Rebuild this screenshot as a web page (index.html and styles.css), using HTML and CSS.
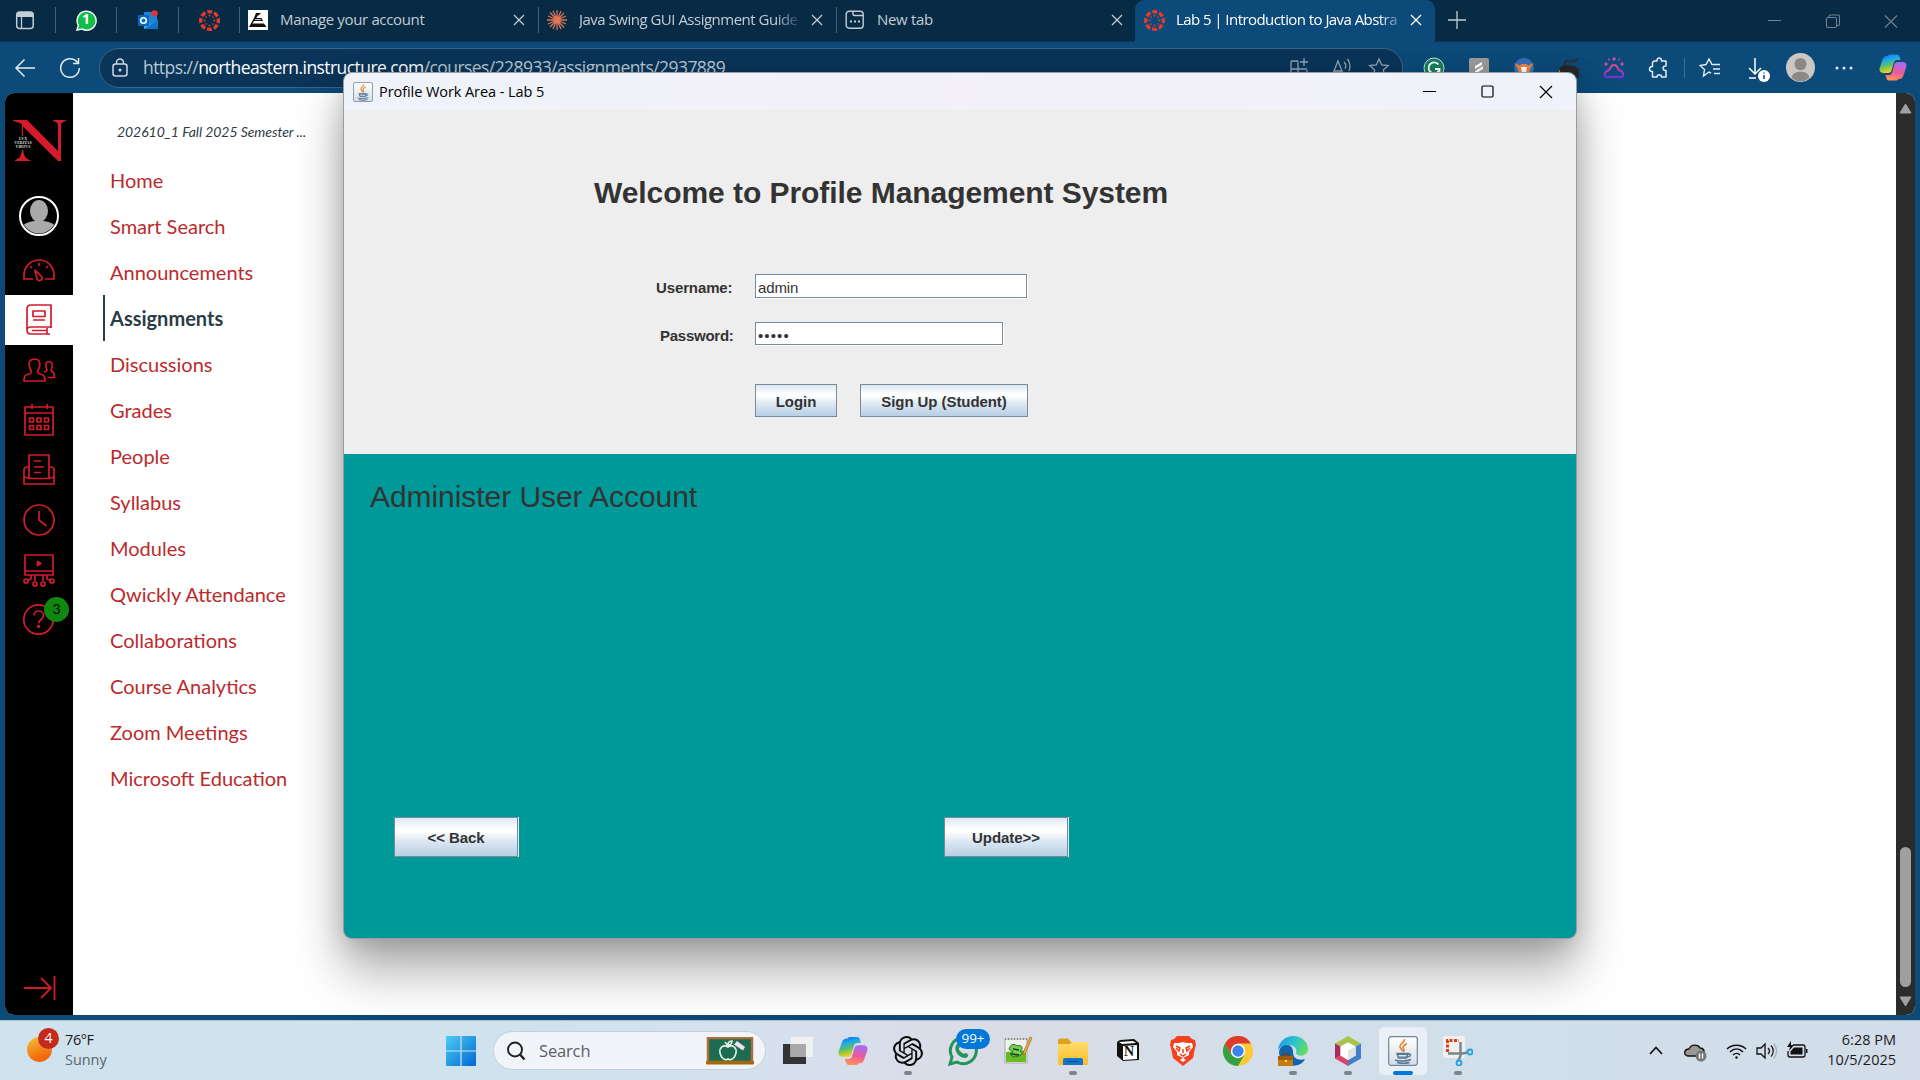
FILE: index.html
```html
<!DOCTYPE html>
<html lang="en">
<head>
<meta charset="utf-8">
<title>Lab 5 | Introduction to Java</title>
<link rel="stylesheet" href="styles.css">
</head>
<body>
<svg class="defs" aria-hidden="true">
  <defs>
    <linearGradient id="cpA" x1="0" y1="0" x2="0.3" y2="1"><stop offset="0" stop-color="#1a5fe0"/><stop offset=".35" stop-color="#18a8ee"/><stop offset=".65" stop-color="#5cc069"/><stop offset="1" stop-color="#f5d215"/></linearGradient>
    <linearGradient id="cpB" x1="0.4" y1="0" x2="0.2" y2="1"><stop offset="0" stop-color="#a56bf2"/><stop offset=".5" stop-color="#ec5a9c"/><stop offset="1" stop-color="#ff9a4a"/></linearGradient>
    <linearGradient id="win" x1="0" y1="0" x2="1" y2="1"><stop offset="0" stop-color="#4ccbf8"/><stop offset="1" stop-color="#0169cf"/></linearGradient>
    <linearGradient id="edg" x1="0" y1=".3" x2="1" y2=".6"><stop offset="0" stop-color="#1b9de2"/><stop offset=".5" stop-color="#2cc3d2"/><stop offset="1" stop-color="#67dc5c"/></linearGradient>
    <linearGradient id="fold" x1="0" y1="0" x2="0" y2="1"><stop offset="0" stop-color="#ffdc69"/><stop offset="1" stop-color="#fbbd2b"/></linearGradient>
    <linearGradient id="jv" x1="0" y1="0" x2="0" y2="1"><stop offset="0" stop-color="#fff"/><stop offset="1" stop-color="#d5dde4"/></linearGradient>
    <linearGradient id="paw" x1="0" y1="0" x2="0" y2="1"><stop offset="0" stop-color="#e0498f"/><stop offset="1" stop-color="#7430d8"/></linearGradient>
    <symbol id="canvas" viewBox="0 0 20 20"><circle cx="10" cy="10" r="8.400" fill="none" stroke="#e73a2e" stroke-width="3.200" stroke-dasharray="4.700 1.897" stroke-dashoffset="2.350"/><g fill="#e73a2e"><circle cx="10" cy="5.300" r=".9"/><circle cx="10" cy="14.700" r=".9"/><circle cx="5.300" cy="10" r=".9"/><circle cx="14.700" cy="10" r=".9"/><circle cx="6.700" cy="6.700" r=".8"/><circle cx="13.300" cy="6.700" r=".8"/><circle cx="6.700" cy="13.300" r=".8"/><circle cx="13.300" cy="13.300" r=".8"/></g></symbol>
    <symbol id="x" viewBox="0 0 12 12"><path d="M1 1l10 10M11 1L1 11" fill="none" stroke="currentColor" stroke-width="1.300"/></symbol>
    <symbol id="copilot" viewBox="0 0 30 28"><path d="M9.500 1.500C10 .5 11 0 12.200 0H19c2 0 2.700 1.200 3.100 2.700L23 6h-3.500c-2 0-3 1-3.600 3l-2.200 7.500C13 19 12 19.800 10 19.800H4.500C1.500 19.800 0 17.500.7 14.500L4 5C5 2.200 7 1.500 9.500 1.500z" fill="url(#cpA)"/><path d="M20.500 26.500c-.5 1-1.500 1.500-2.700 1.500H11c-2 0-2.700-1.200-3.100-2.700L7 22h3.500c2 0 3-1 3.600-3l2.200-7.500C17 9 18 8.200 20 8.200h5.500c3 0 4.500 2.300 3.800 5.300L26 23c-1 2.800-3 3.500-5.500 3.500z" fill="url(#cpB)"/></symbol>
    <symbol id="java" viewBox="0 0 30 30"><rect x=".7" y=".7" width="28.600" height="28.600" rx="2.500" fill="url(#jv)" stroke="#71859a" stroke-width="1.200"/><path d="M16.500 3c1 3-5.500 5-4.500 8 .5 1.500 2 2.500 2.500 4M19 7.500c-3 1.500-5 3.500-3.500 5.500 1 1.300.5 2.200-.5 3" fill="none" stroke="#e8812f" stroke-width="1.600"/><path d="M9 17.500h11l-1.500 4.500h-8zM20 18c3.500-.8 3.500 2.500-.8 3M7 24c3 1.500 12 1.500 16-.5M9 26.500c4 1 9 1 12.500 0" fill="none" stroke="#557997" stroke-width="1.500"/><path d="M9 18.500h11M10 21h9" stroke="#557997"/></symbol>
    <symbol id="person" viewBox="0 0 30 30"><circle cx="15" cy="15" r="15" fill="#cbc8c4"/><circle cx="15" cy="11.500" r="6.300" fill="#8b8886"/><path d="M6 25.500c0-8 18-8 18 0-5 5-13 5-18 0z" fill="#8b8886"/></symbol>
  </defs>
</svg>

<header class="tabs">
  <div class="pin p1"><svg width="20" height="20" viewBox="0 0 20 20"><rect x="1.700" y="2" width="16.500" height="16.500" rx="3" fill="none" stroke="#c4ccd4" stroke-width="1.500"/><path d="M1.700 7V5a3 3 0 013-3h10.500a3 3 0 013 3v2z" fill="#c4ccd4"/><path d="M6.500 7v11" stroke="#c4ccd4" stroke-width="1.300"/></svg></div>
  <div class="pin p2"><svg width="21" height="21" viewBox="0 0 21 21"><path d="M1 20l1.300-4.700A9.500 9.500 0 1 1 6 19z" fill="#12bd49" stroke="#e9f7ee" stroke-width="1.500"/></svg><b class="one">1</b></div>
  <div class="pin p3"><svg width="22" height="21" viewBox="0 0 22 21"><rect x="7" y="2" width="13" height="16" fill="#1b84d8"/><path d="M7 10l7 4 7-4v9H7z" fill="#36a8ec"/><path d="M7 19l14-9v9z" fill="#1374c6"/><rect x="1" y="5" width="11" height="11" rx="1" fill="#0b66c2"/><circle cx="6.500" cy="10.500" r="2.800" fill="none" stroke="#fff" stroke-width="1.600"/><circle cx="17.500" cy="3.500" r="3.200" fill="#d93740"/></svg></div>
  <div class="pin p4"><svg width="21" height="21"><use href="#canvas"/></svg></div>
  <div class="tab t1"><svg width="20" height="20" viewBox="0 0 20 20"><path fill="#fff" d="M0 0h20v20H0z"/><path d="M8 3h5l-5 5h5.500l1.500 3H6l-1.500 2.500H16L18.500 17H1l5-9z" fill="#111"/><path d="M9 6.200h4M7 9.600h6" stroke="#fff" stroke-width=".8"/></svg><span>Manage your account</span><svg class="cl" width="12" height="12"><use href="#x"/></svg></div>
  <div class="tab t2"><svg width="20" height="20" viewBox="0 0 20 20"><path d="M10 0v20M0 10h20M3 2.500l14 15M17 3L3 17M6 .8l8 18.400M14 1L6 19M1 6l18 8M1 14l18-8" stroke="#df7655" stroke-width="1.300" fill="none"/></svg><span class="fade">Java Swing GUI Assignment Guide</span><svg class="cl" width="12" height="12"><use href="#x"/></svg></div>
  <div class="tab t3"><svg width="20" height="20" viewBox="0 0 20 20"><rect x="1.200" y="1.200" width="17" height="17" rx="3" fill="none" stroke="#c4ccd4" stroke-width="1.400"/><path d="M8 1v3c0 1 .5 1.500 1.500 1.500H18" fill="none" stroke="#c4ccd4" stroke-width="1.400"/><path d="M5 11.500h2M9 11.500h2M13 11.500h2" stroke="#c4ccd4" stroke-width="2"/></svg><span>New tab</span><svg class="cl" width="12" height="12"><use href="#x"/></svg></div>
  <div class="tab active"><svg width="21" height="21"><use href="#canvas"/></svg><span class="fade">Lab 5 | Introduction to Java Abstra</span><svg class="cl" width="12" height="12"><use href="#x"/></svg></div>
  <svg class="plus" width="18" height="18" viewBox="0 0 18 18"><path d="M9 0v18M0 9h18" stroke="#c3ccd3" stroke-width="1.300"/></svg>
  <svg class="winctl" width="132" height="16" viewBox="0 0 132 16" fill="none" stroke="#71818f" stroke-width="1.100"><path d="M1 7.500h13M118 2.500l12 12M130 2.500l-12 12"/><rect x="59.500" y="4.500" width="10" height="10" rx="1.500"/><path d="M62 4V3.500a1.500 1.500 0 011.500-1.500H71a1.500 1.500 0 011.500 1.500V11a1.500 1.500 0 01-1.500 1.500h-1"/></svg>
</header>

<div class="bar">
  <svg width="22" height="22" viewBox="0 0 22 22" fill="none" stroke="#e3ebf1" stroke-width="1.500"><path d="M21 11H2M10.500 2.500L2 11l8.500 8.500"/></svg>
  <svg class="reload" width="22" height="22" viewBox="0 0 22 22" fill="none" stroke="#e3ebf1" stroke-width="1.500"><path d="M18.500 5.500A9.300 9.300 0 1 0 20.300 11M19.500 1v5.500H14"/></svg>
  <div class="url">
    <svg width="18" height="20" viewBox="0 0 18 20" fill="none" stroke="#cfd9e1" stroke-width="1.500"><rect x="2" y="6" width="14" height="12" rx="2.500"/><path d="M5.500 6V4.500a3.500 3.500 0 017 0V6"/><circle cx="9" cy="12" r=".8" fill="#cfd9e1"/></svg>
    <span class="addr"><i>https://</i>northeastern.instructure.com<i>/courses/228933/assignments/2937889</i></span>
    <svg class="uico" width="110" height="22" viewBox="0 0 110 22" fill="none" stroke="#8ea5b8" stroke-width="1.300"><path d="M9 4H3a1 1 0 00-1 1v14a1 1 0 001 1h14a1 1 0 001-1v-6M9 4v16M2 12h16M15 1v8M11 5h8M43 19l6-15 6 15M45.300 14h7.500M55 5c2 2 2 5 1 7M58.500 2c3 4 3 8 1.500 12"/><path d="M90 2l2.700 6 6.600.6-5 4.300 1.500 6.500-5.800-3.400-5.800 3.400 1.500-6.500-5-4.300 6.600-.6z"/></svg>
  </div>
  <div class="ext">
    <svg width="22" height="22" viewBox="0 0 22 22"><circle cx="11" cy="11" r="10" fill="#14805e" stroke="#c6e1d8"/><path d="M15.500 7.500A5.500 5.500 0 1 0 16.500 12H12M16.500 12v4" fill="none" stroke="#fff" stroke-width="1.800"/></svg>
    <svg width="22" height="22" viewBox="0 0 22 22"><rect x="1" y="1" width="20" height="20" rx="2" fill="#9c9c9c"/><path d="M7 9l7-4v3l-7 4zM7 14l8-5v3l-8 5z" fill="#fff"/></svg>
    <svg width="22" height="22" viewBox="0 0 22 22"><circle cx="11" cy="11" r="10" fill="#3a6fb4"/><path d="M1.500 6l5 2.500L9 7h4l2.500 1.500 5-2.500-3 5.500-2 5h-9l-2-5z" fill="#ee8740"/><path d="M8 10h6l-1 6H9z" fill="#fff"/></svg>
    <svg width="22" height="22" viewBox="0 0 22 22"><path d="M1 11l5-3 11 1 4 3v9H1z" fill="#272727"/><path d="M7 8V5c3-3 6 1 9-1 2-1 3 0 3-3" fill="none" stroke="#303030" stroke-width="2"/><path d="M1 12l4 9H1z" fill="#e8972b"/></svg>
    <svg width="22" height="22" viewBox="0 0 22 22"><path d="M3 20C0 17 3 14 6 13c2-1 1-5 5-5s3 4 5 5c3 1 6 4 3 7z" fill="none" stroke="url(#paw)" stroke-width="2.200" stroke-linejoin="round"/><g fill="#c34ca5"><circle cx="11" cy="2" r="1.800"/><circle cx="3" cy="7" r="1.700"/><circle cx="19" cy="7" r="1.700"/><circle cx="6" cy="2.500" r="1"/><circle cx="16" cy="2.500" r="1"/></g></svg>
    <svg width="22" height="22" viewBox="0 0 22 22"><path d="M6 4h3c-.5-4 5-4 4.500 0H18v5c-4-.5-4 5 0 4.500V20h-4.500c.3-3-4.800-3-4.500 0H4.500v-5.500C.5 15 .5 9.500 4.500 9.500V5.500z" fill="none" stroke="#e3ebf1" stroke-width="1.500" stroke-linejoin="round"/></svg>
  </div>
  <i class="sep"></i>
  <svg class="fav" width="22" height="22" viewBox="0 0 22 22" fill="none" stroke="#e3ebf1" stroke-width="1.400"><path d="M12 16l-2-1-5.500 4 1-6.500L1 8.500l6-1L10 2l3 5.500h8M14 12h7M15 16.500h6"/></svg>
  <svg class="down" width="26" height="28" viewBox="0 0 26 28" fill="none" stroke="#fff" stroke-width="1.500"><path d="M10 4v16M4 14l6 6 6-6M4 24h7"/><circle cx="19" cy="22" r="6" fill="#fff" stroke="none"/><path d="M19 21v4M19 18.500v1" stroke="#0c4a7a"/></svg>
  <svg class="me" width="29" height="29"><use href="#person"/></svg>
  <svg class="dots" width="18" height="4" viewBox="0 0 18 4" fill="#e3ebf1"><circle cx="2" cy="2" r="1.500"/><circle cx="9" cy="2" r="1.500"/><circle cx="16" cy="2" r="1.500"/></svg>
  <svg class="cop" width="28" height="27"><use href="#copilot"/></svg>
</div>

<main class="page">
  <nav class="rail">
    <svg class="logo" width="54" height="42" viewBox="0 0 54 42"><path d="M1 0h14l31 31V5c0-2-2-3.500-5-4V0h13v1c-3 .5-5 2-5 4v36h-3L11 6.500V16H9.800V4C7 2.500 4 1.500 1 1zM10 30h1.200c.5 6 3 9 6.800 10v1H3v-1c4-1 6.500-4 7-10z" fill="#d41b2c"/></svg>
    <div class="motto">LVX<br>VERITAS<br>VIRTVS</div>
    <svg class="ava" width="40" height="40" viewBox="0 0 40 40"><clipPath id="ac"><circle cx="20" cy="20" r="17.500"/></clipPath><circle cx="20" cy="20" r="19" stroke="#fff" stroke-width="2"/><g fill="#a9a9a9" clip-path="url(#ac)"><ellipse cx="20" cy="15" rx="9" ry="11"/><path d="M16 22h8v3c6 .5 14 3 14 9v6H2v-6c0-6 8-8.500 14-9z"/></g></svg>
    <div class="ri"><svg viewBox="0 0 34 34"><path d="M11 26H2v-4a15 15 0 0130 0v4h-9M17 10v3M8 13l2 2M26 13l-2 2M13 17l7 7c1 3-3 5-5 2z"/></svg></div>
    <div class="ri on"><svg viewBox="0 0 34 34"><path d="M29 25V2H9C6 2 5 3.500 5 6v21c0 3 1 4 4 4h19M5 27c0-2 1-3 4-3h20M25 25v6M10 27.500h14"/><path d="M11 8h12v5.500H11zM11 17h12"/></svg></div>
    <div class="ri"><svg viewBox="0 0 34 34"><path d="M2 28c0-5 1-6 5-7 3-.8 3-2 1.500-4.500C5 9 9 6 12.500 6S20 9 16.500 16.500C15 19 15 20.200 18 21c4 1 5 2 5 7zM22 19c4-1 3-2 2.300-4-1.500-4 0-6.500 2.700-6.500s4.200 2.500 2.700 6.500c-.8 2-1.200 3 .8 3.800 1.700.7 2 1.700 2 5.700h-7"/></svg></div>
    <div class="ri"><svg viewBox="0 0 34 34"><path d="M3 4h28v28H3zM3 10h28M10 1v5M25 1v5M7.500 15h4v4h-4zM15 15h4v4h-4zM22.500 15h4v4h-4zM7.500 22.500h4v4h-4zM15 22.500h4v4h-4zM22.500 22.500h4v4h-4z"/></svg></div>
    <div class="ri"><svg viewBox="0 0 34 34"><path d="M7 25V2h20v23M8 14H5c-2 0-3 1-3 3v14h30V17c0-2-1-3-3-3h-2M2 24c3 0 3 1.500 5 1.500h20c2 0 2-1.500 5-1.500M12 8h7M12 14h10M12 19.500h7"/></svg></div>
    <div class="ri"><svg viewBox="0 0 34 34"><circle cx="17" cy="17" r="15"/><path d="M17 8v9l7.500 6"/></svg></div>
    <div class="ri"><svg viewBox="0 0 34 34"><path d="M3 2h28v20H3zM3 18h28M13 22v6M21 22v6M9 22v4l-4 1.500M25 22v4l4 1.500"/><path d="M15.500 8.500v4l3.200-2z" fill="#d41b2c"/><circle cx="4" cy="28" r="2"/><circle cx="13" cy="31" r="2"/><circle cx="21" cy="31" r="2"/><circle cx="30" cy="28" r="2"/></svg></div>
    <div class="ri"><svg viewBox="0 0 34 34"><circle cx="16.500" cy="16.500" r="14.700"/><path d="M12 12.500c0-6 9.500-6 9.500 0 0 4-5 4-5 8"/><circle cx="16.500" cy="23.500" r=".8"/></svg><b class="n3">3</b></div>
    <svg class="exp" width="34" height="26" viewBox="0 0 34 26"><path d="M1 13h27M18 3l10 10-10 10M31.500 1v24" fill="none" stroke="#d41b2c" stroke-width="1.800"/></svg>
  </nav>
  <aside class="menu">
    <em>202610_1 Fall 2025 Semester ...</em>
    <a>Home</a><a>Smart Search</a><a>Announcements</a><a class="cur">Assignments</a><a>Discussions</a><a>Grades</a><a>People</a><a>Syllabus</a><a>Modules</a><a>Qwickly Attendance</a><a>Collaborations</a><a>Course Analytics</a><a>Zoom Meetings</a><a>Microsoft Education</a>
  </aside>
  <div class="scroll"><svg width="13" height="11" viewBox="0 0 13 11"><path d="M6.500 1L12 10H1z" fill="#a0a0a0" stroke="#a0a0a0" stroke-linejoin="round"/></svg><i></i><svg width="13" height="11" viewBox="0 0 13 11"><path d="M6.500 10L12 1H1z" fill="#a0a0a0" stroke="#a0a0a0" stroke-linejoin="round"/></svg></div>
</main>

<footer class="task">
  <div class="wx"><i class="sun"></i><b class="four">4</b><p>76°F<br><span>Sunny</span></p></div>
  <svg class="start" width="30" height="30" viewBox="0 0 30 30"><path d="M0 1a1 1 0 011-1h13.400v14.400H0zM15.600 0H29a1 1 0 011 1v13.400H15.600zM0 15.600h14.400V30H1a1 1 0 01-1-1zM15.600 15.600H30V29a1 1 0 01-1 1H15.600z" fill="url(#win)"/></svg>
  <div class="search">
    <svg width="20" height="20" viewBox="0 0 20 20" fill="none" stroke="#222"><circle cx="9" cy="8.500" r="7" stroke-width="1.900"/><path d="M14 13.500l4.500 5" stroke-width="2.400"/></svg>
    <span>Search</span>
    <svg width="48" height="28" viewBox="0 0 48 28"><rect x="2" y="1" width="44" height="24" fill="#1d6b50" stroke="#ab6d3c" stroke-width="2.500"/><rect x="0" y="24" width="48" height="3.500" rx="1" fill="#a8660c"/><path d="M22 10c-5-3-9 1-8 6s5 8 8 6c3 2 7-1 8-6s-3-9-8-6zM22 10c0-3-2-3-3-5M22 8c2 0 4-1 4-4-3 0-4 2-4 4" fill="none" stroke="#e3f0e6" stroke-width="1.600"/><path d="M31 4l8 6-2 3.500-9-6z" fill="#eee3ec"/></svg>
  </div>
  <div class="apps">
    <div><svg viewBox="0 0 30 30"><path d="M0 8h23v20H0z" fill="#333"/><path d="M7.500 1H30v20H7.500z" fill="#f1f1f1"/><path d="M7.500 8H23v13H7.500z" fill="#a9a9a9"/></svg></div>
    <div><svg viewBox="0 0 30 30"><use href="#copilot" x="0" y="1" width="30" height="28"/></svg></div>
    <div class="run"><svg viewBox="0 0 24 24"><path fill="#0b0b0b" d="M22.282 9.821a5.985 5.985 0 0 0-.516-4.910 6.046 6.046 0 0 0-6.510-2.900A6.065 6.065 0 0 0 4.981 4.182a5.985 5.985 0 0 0-3.998 2.900 6.046 6.046 0 0 0 .743 7.097 5.980 5.980 0 0 0 .510 4.911 6.051 6.051 0 0 0 6.515 2.900A5.985 5.985 0 0 0 13.260 24a6.056 6.056 0 0 0 5.772-4.206 5.990 5.990 0 0 0 3.997-2.900 6.056 6.056 0 0 0-.747-7.073zM13.260 22.430a4.476 4.476 0 0 1-2.876-1.040l.141-.081 4.779-2.758a.795.795 0 0 0 .392-.681v-6.737l2.020 1.168a.071.071 0 0 1 .038.052v5.583a4.504 4.504 0 0 1-4.494 4.494zM3.600 18.304a4.470 4.470 0 0 1-.535-3.014l.142.085 4.783 2.759a.771.771 0 0 0 .780 0l5.843-3.369v2.332a.080.080 0 0 1-.033.062L9.740 19.950a4.500 4.500 0 0 1-6.140-1.646zM2.340 7.896a4.485 4.485 0 0 1 2.366-1.973V11.600a.766.766 0 0 0 .388.676l5.815 3.355-2.020 1.168a.076.076 0 0 1-.071 0l-4.830-2.786A4.504 4.504 0 0 1 2.340 7.872zm16.597 3.855l-5.833-3.387L15.119 7.200a.076.076 0 0 1 .071 0l4.830 2.791a4.494 4.494 0 0 1-.676 8.105v-5.678a.790.790 0 0 0-.407-.667zm2.010-3.023l-.141-.085-4.774-2.782a.776.776 0 0 0-.785 0L9.409 9.230V6.897a.066.066 0 0 1 .028-.061l4.830-2.787a4.500 4.500 0 0 1 6.680 4.660zm-12.640 4.135l-2.020-1.164a.080.080 0 0 1-.038-.057V6.075a4.500 4.500 0 0 1 7.375-3.453l-.142.080L8.704 5.460a.795.795 0 0 0-.393.681zm1.097-2.365l2.602-1.500 2.607 1.500v2.999l-2.597 1.500-2.607-1.500z"/></svg></div>
    <div><svg viewBox="0 0 30 30"><path d="M2 28l2-7A13 13 0 1 1 9 26z" fill="none" stroke="#23945a" stroke-width="3"/><path d="M8 9c2-2 3-1 4 2-2 2-1 3 1 5s3 2 5 1c3 2 3 3 0 5-6 1-13-7-10-13z" fill="#23945a"/></svg><b class="b99">99+</b></div>
    <div><svg viewBox="0 0 30 30"><path d="M2 3h22v24H2z" fill="#f0f1ed" stroke="#aaa"/><path d="M3 16l20-2v12H3z" fill="#65bd22"/><path d="M6 13c2-6 6-5 8-3 5-2 7 3 3 5l3 2-4 3c-5 2-8 0-9-2l3-2z" fill="#79cf50" stroke="#26752c"/><path d="M10 13l6 1M8 18l8 1" stroke="#173d19" stroke-width="1.500"/><path d="M27 1l2 1-7 16-2 1v-2z" fill="#f3b33d" stroke="#965e2b" stroke-width=".7"/><path d="M2 3h22" stroke="#888" stroke-dasharray="1 2" stroke-width="2"/></svg></div>
    <div class="run"><svg viewBox="0 0 30 30"><path d="M0 5c0-1.500.8-2.500 2-2.500h8L13 6h15a2 2 0 012 2v4H0z" fill="#e3a01e"/><path d="M0 8h12l2-2h15a1 1 0 011 1v21a1 1 0 01-1 1H1a1 1 0 01-1-1z" fill="url(#fold)"/><path d="M5 29v-5a2 2 0 012-2h16a2 2 0 012 2v5z" fill="#1275c9"/><path d="M9 25.500h12" stroke="#0b4f91"/></svg></div>
    <div><svg viewBox="0 0 30 30"><path d="M4 6l3-2 14-1 5 4v17l-16 1-6-5z" fill="#111"/><path d="M6 6l14-1 3 2-14 1z" fill="#fff"/><path d="M10 10l14-1v14l-14 1z" fill="#fff"/></svg><b class="nn">N</b></div>
    <div><svg viewBox="0 0 30 30"><path d="M9 0h12l3 3 3 1 1 5-1 3-2 10-10 8-10-8L3 12 2 9l1-5 3-1z" fill="#f5411c"/><path d="M6 7l5 0 4-1 4 1h5l1 4-4 5 0 3-6 3-6-3V16l-4-5z" fill="#fff"/><path d="M8 10l4 2-1 3-3-3M22 10l-4 2 1 3 3-3M15 13v4M12 18l3 2 3-2" stroke="#f5411c" fill="none" stroke-width="1.500"/><path d="M12 24l3-2 3 2-3 2z" fill="#fff"/></svg></div>
    <div><svg viewBox="0 0 30 30"><circle cx="15" cy="15" r="15" fill="#fcc934"/><path d="M2 7.500A15 15 0 0015 30l6.500-11.200L8.500 18.800z" fill="#34a142"/><path d="M2 7.500a15 15 0 0126 0H15l-6.500 11.200z" fill="#dd3b2e"/><circle cx="15" cy="15" r="7.200" fill="#fff"/><circle cx="15" cy="15" r="5.700" fill="#3b83ee"/></svg></div>
    <div class="run"><svg viewBox="0 0 30 30"><path d="M1 16c1-9 14-10 14 0 0 7 6 9 12 7-4 8-14 8-20 4-4-3-6-7-6-11z" fill="#1264ae"/><path d="M0 14C1 5 8 0 15 0c9 0 15 6 15 13 0 8-11 8-12 4 3-7-11-13-18-3z" fill="url(#edg)"/><path d="M0 20h15v10H0z" fill="#c57b10"/><path d="M0 20h15v4H0z" fill="#9d5c0d"/><path d="M5 20v-2h5v2" fill="none" stroke="#704009" stroke-width="1.500"/><path d="M7 24h2v2H7z" fill="#ffe05d"/></svg></div>
    <div class="run"><svg viewBox="0 0 30 30"><path d="M15 0l13 7.500-5.500 3L15 6.500l-7.500 4-5.500-3z" fill="#abc24c"/><path d="M2 7.500l5.500 3v9L2 22.500z" fill="#a62c5b"/><path d="M2 22.500l5.500-3L15 24v6z" fill="#d9456b"/><path d="M28 7.500v15L15 30v-6l7.500-4.500v-9z" fill="#447fc5"/><path d="M15 6.500l7.500 4v9L15 24l-7.500-4.500v-9z" fill="#fff"/><path d="M15 14.500l7.500-4v9L15 24z" fill="#dfe5e5"/></svg></div>
    <div class="sel"><svg viewBox="0 0 30 30"><use href="#java"/></svg></div>
    <div class="run"><svg viewBox="0 0 30 30"><rect width="22" height="22" rx="2" fill="#f2f0ef"/><path d="M4.500 16V4.500H16" fill="none" stroke="#d2401c" stroke-width="3" stroke-dasharray="3 1.500"/><path d="M17.500 6v14l-2 4M5 17.500h15l4-1" fill="none" stroke="#79858e" stroke-width="2.500"/><circle cx="16" cy="27" r="2.500" fill="none" stroke="#25a1e1" stroke-width="1.800"/><circle cx="27" cy="16" r="2.500" fill="none" stroke="#25a1e1" stroke-width="1.800"/></svg></div>
  </div>
  <svg class="tray" width="160" height="24" viewBox="0 0 160 24" fill="none" stroke="#111" stroke-width="1.700"><path d="M1 15l6-6.500 6 6.500"/><path d="M40 17h-1c-5-1-4-7 1-7 2-5 9-5 11-1 5 0 6 8 0 8z" fill="#999" stroke-width="1.400"/><circle cx="52" cy="17" r="5.500" fill="#777" stroke="none"/><path d="M50.500 14.500v5M53.500 14.500v5" stroke="#fff" stroke-width="1.300"/><path d="M78 10c5-5 14-5 19 0M81 13c4-4 9-4 13 0M84 16c2-2 5-2 7 0" stroke-width="1.500"/><circle cx="87.500" cy="18.500" r="1.200" fill="#111" stroke="none"/><path d="M108 9h4l4-4v14l-4-4h-4zM119 9c2 2 2 4 0 6" stroke-width="1.300"/><path d="M122 6.500c3 3 3 8 0 11" stroke-width="1.200"/><path d="M124.500 4.500c4 4 4 11 0 15" stroke="#a8b1b9" stroke-width="1.200"/><path d="M144 6h10a2 2 0 012 2v8a2 2 0 01-2 2h-13a2 2 0 01-2-2v-4" stroke-width="1.300"/><path d="M145 8.500h8.500v7h-12v-3z" fill="#111" stroke="none"/><path d="M157 10h1.500v4H157z" fill="#111" stroke="none"/><path d="M142 2l-4 6h3l-1 4 5-6h-3z" fill="#111" stroke="none"/></svg>
  <div class="clock">6:28 PM<br>10/5/2025</div>
</footer>

<section class="window">
  <div class="title"><svg width="20" height="20"><use href="#java"/></svg><span>Profile Work Area - Lab 5</span><svg class="wc" width="132" height="16" viewBox="0 0 132 16" fill="none" stroke="#000" stroke-width="1.200"><path d="M1 7.500h13M118 2l12 12M130 2l-12 12"/><rect x="60" y="2" width="11" height="11" rx="1.200"/></svg></div>
  <div class="login">
    <h1>Welcome to Profile Management System</h1>
    <div class="row r1"><label>Username:</label><div class="in">admin</div></div>
    <div class="row r2"><label>Password:</label><div class="in pw">•••••</div></div>
    <div class="btns"><button class="b1">Login</button><button class="b2">Sign Up (Student)</button></div>
  </div>
  <div class="admin">
    <h2>Administer User Account</h2>
    <div class="btns2"><button>&lt;&lt; Back</button><button>Update&gt;&gt;</button></div>
  </div>
</section>
</body>
</html>
```
FILE: styles.css
```css
* { box-sizing: border-box; }
body {
  margin: 0; width: 1920px; height: 1080px; overflow: hidden; position: relative;
  display: flex; flex-direction: column; background: #0c4a7a;
  font-family: "Open Sans", "Noto Sans", sans-serif;
}
svg { display: block; flex: none; }
.defs { position: absolute; width: 0; height: 0; }
i, em { font-style: normal; }

/* tab strip */
.tabs { height: 42px; background: #072a45; display: flex; align-items: center; color: #c3ccd4; font-size: 15px; flex: none; border-bottom: 1px solid #093455; }
.pin { height: 26px; margin-top: -1px; border-right: 1px solid #4a6072; display: flex; align-items: center; justify-content: center; position: relative; flex: none; width: 61px; }
.p1 { width: 56px; padding-right: 5px; }
.p3 { width: 62px; }
.one { position: absolute; left: 0; right: 0; top: 2px; text-align: center; color: #fff; font-size: 14px; line-height: 20px; }
.tab { display: flex; align-items: center; height: 26px; border-right: 1px solid #4a6072; flex: none; margin-top: -1px; padding-left: 8px; padding-right: 13px; }
.tab span { margin-left: 12px; white-space: nowrap; flex: 1; overflow: hidden; line-height: 22px; padding-bottom: 2px; }
.t1 { width: 299px; letter-spacing: -.35px; }
.t2 { width: 298px; letter-spacing: -.4px; }
.t2 span { margin-right: 8px; }
.t3 { width: 298px; border: 0; padding-right: 12px; letter-spacing: -.3px; }
.fade { -webkit-mask-image: linear-gradient(90deg, #000 88%, transparent 100%); mask-image: linear-gradient(90deg, #000 88%, transparent 100%); }
.active { width: 300px; height: 42px; margin-top: 1px; background: #0c4a7a; color: #fff; border: 0; border-radius: 9px 9px 0 0; padding: 0 13px 2px 9px; letter-spacing: -.5px; }
.tab.t2 span { letter-spacing: -.5px; }
.tab.active span { margin: 0 4px 0 11px; letter-spacing: -.56px; }
.plus { margin: -2px 0 0 13px; }
.winctl { margin: 0 21px 0 auto; }

/* toolbar */
.bar { height: 51px; display: flex; align-items: center; padding-left: 14px; flex: none; }
.reload { margin-left: 23px; }
.url { width: 1304px; height: 40px; margin-left: 18px; border: 1px solid #41627f; border-radius: 20px; background: #0a3558; display: flex; align-items: center; padding: 0 0 0 11px; flex: none; }
.addr { margin-left: 14px; margin-top: -1px; color: #fff; font-size: 17.500px; letter-spacing: -.57px; white-space: nowrap; flex: 1; }
.addr i { color: #b9c8d4; }
.uico { margin-right: 3px; }
.ext { display: flex; gap: 23px; margin-left: 20px; }
.sep { width: 1px; height: 20px; background: #3e6c92; margin-left: 14px; }
.fav { margin-left: 14px; }
.down { margin-left: 24px; }
.me { margin-left: 15px; }
.dots { margin-left: 20px; }
.cop { margin-left: 32px; }
.bar .cop { margin-left: 26px; }

/* course page */
.page { height: 922px; margin: 0 5px; background: #fff; border-radius: 9px; display: flex; overflow: hidden; flex: none; }
.rail { width: 68px; background: #000; display: flex; flex-direction: column; align-items: center; position: relative; flex: none; }
.logo { margin-top: 27px; }
.motto { position: absolute; left: 7px; top: 44px; width: 22px; color: #ddd; font: bold 4px/4px "Liberation Serif", serif; text-align: center; }
.ava { margin-top: 34px; margin-bottom: 9px; }
.ri { width: 68px; height: 50px; display: flex; align-items: center; justify-content: center; position: relative; flex: none; }
.ri svg { width: 34px; height: 34px; fill: none; stroke: #d41b2c; stroke-width: 1.700; stroke-linejoin: round; }
.on { background: #fff; }
.n3 { position: absolute; left: 39px; top: 2px; width: 25px; height: 25px; border-radius: 50%; background: #118611; color: #000; font: 14px/23px Lato, sans-serif; text-align: center; }
.exp { margin-top: auto; margin-bottom: 14px; margin-left: 2px; }
.menu { width: 260px; padding: 25px 0 0 30px; font-family: Lato, sans-serif; display: flex; flex-direction: column; }
.menu em { font-style: italic; font-size: 14px; line-height: 27px; margin: 0 0 12px 14px; color: #2d3b45; white-space: nowrap; letter-spacing: -.06px; }
.menu a { font-size: 20px; line-height: 46px; height: 46px; padding-left: 5px; border-left: 2px solid transparent; color: #bb2a2c; }
.menu .cur { color: #2d3b45; font-weight: 700; border-color: #2d3b45; position: relative; }
.scroll { width: 19px; background: #2b2b2b; margin-left: auto; display: flex; flex-direction: column; align-items: center; padding: 10px 0 8px; }
.scroll i { width: 11px; height: 140px; border-radius: 6px; background: #9f9f9f; margin-top: auto; margin-bottom: 9px; }

/* taskbar */
.task { height: 60px; margin-top: 5px; background: linear-gradient(90deg, #cee3ee 0%, #d0e2ee 28%, #d6e0ef 40%, #dadce5 52%, #d3dfea 64%, #d0dfea 80%, #d3ddea 100%); border-top: 1px solid #b2bfc9; display: flex; align-items: center; flex: none; }
.wx { width: 446px; height: 59px; padding-left: 65px; position: relative; }
.wx p { margin: 9px 0 0; font-size: 14.500px; line-height: 20px; color: #1b1b1b; letter-spacing: -.4px; }
.wx p span { color: #5c656b; letter-spacing: -.05px; }
.sun { position: absolute; left: 27px; top: 16px; width: 25px; height: 25px; border-radius: 50%; background: linear-gradient(160deg, #f5c23b, #f26a0c 75%); }
.four { position: absolute; left: 38px; top: 7px; width: 21px; height: 21px; border-radius: 50%; background: #c42b1c; color: #fff; font-size: 14px; font-weight: 400; line-height: 20px; text-align: center; }
.search { width: 273px; height: 39px; margin-left: 17px; border-radius: 20px; background: #f1f5fa; border: 1px solid #c3ced9; display: flex; align-items: center; padding: 0 11px 0 12px; }
.search span { flex: 1; margin-left: 13px; font-size: 16.500px; color: #5b5f63; letter-spacing: -.15px; }
.apps { display: flex; margin-left: 8px; gap: 7px; }
.apps > div { width: 48px; height: 48px; border-radius: 5px; display: flex; align-items: center; justify-content: center; position: relative; }
.apps svg { width: 30px; height: 30px; }
.apps .run::after, .apps .sel::after { content: ""; position: absolute; left: 20px; bottom: 0; width: 8px; height: 4px; border-radius: 2px; background: #7f848a; }
.apps .sel { background: #e9eff6; }
.apps .sel::after { left: 14px; width: 20px; background: #0078d7; }
.b99 { position: absolute; left: 17px; top: 2px; width: 34px; height: 20px; border-radius: 10px; background: #0078d7; color: #fff; font-size: 13.500px; line-height: 19px; font-weight: 400; text-align: center; }
.nn { position: absolute; left: 20px; top: 15px; font: bold 14px/20px "Liberation Serif", serif; color: #111; }
.tray { margin-left: 167px; }
.clock { margin-left: auto; margin-right: 24px; text-align: right; font-size: 14.500px; line-height: 20px; color: #1b1b1b; letter-spacing: 0; margin-top: -2px; }

/* floating application window */
.window { position: absolute; left: 343px; top: 72px; width: 1234px; height: 867px; border: 1px solid #9a9da0; border-radius: 9px; overflow: hidden; background: #009999; box-shadow: 0 32px 50px rgba(0,0,0,.32), 0 4px 26px rgba(0,0,0,.17); display: flex; flex-direction: column; font-family: "Liberation Sans", Arial, sans-serif; color: #333; }
.title { height: 37px; background: linear-gradient(90deg, #eff3f9, #f3f0f7 50%, #f0f2f9); display: flex; align-items: center; padding-left: 9px; color: #000; font: 14.500px "Open Sans", sans-serif; letter-spacing: -.07px; flex: none; }
.title span { margin-left: 6px; }
.wc { margin-left: auto; margin-right: 22px; }
.login { height: 344px; background: #eee; padding-top: 65px; flex: none; }
h1, h2 { margin: 0; font-weight: 700; font-size: 30px; line-height: 36px; padding-left: 250px; white-space: nowrap; letter-spacing: -.06px; }
.row { display: flex; align-items: flex-start; height: 24px; }
.r1 { margin-top: 63px; }
.r2 { margin-top: 24px; }
.row label { width: 77px; margin-left: 312px; font-weight: 700; font-size: 15px; line-height: 27px; letter-spacing: -.12px; }
.r2 label { margin-left: 316px; width: 73px; letter-spacing: -.25px; }
.in { margin-left: 22px; width: 272px; height: 24px; border: 1px solid #7a8a99; background: #fff; box-shadow: 1px 1px 0 #fff; font-size: 15px; line-height: 25px; padding-left: 2px; letter-spacing: -.15px; }
.pw { width: 248px; height: 23px; line-height: 26px; letter-spacing: 1.100px; }
.btns { display: flex; gap: 23px; margin: 38px 0 0 411px; }
button { height: 33px; border: 1px solid #7a8a99; border-radius: 0; background: linear-gradient(#dde8f3, #fff 30%, #fff 35%, #dde8f3 60%, #b8cfe5); font: bold 15px "Liberation Sans", sans-serif; color: #333; padding: 2px 0 0; letter-spacing: -.07px; white-space: nowrap; }
.b1 { width: 82px; }
.b2 { width: 168px; }
.admin { padding: 25px 0 0; }
h2 { font-weight: 400; padding-left: 26px; }
.btns2 { display: flex; gap: 426px; margin: 302px 0 0 50px; }
.btns2 button { width: 124px; height: 40px; padding: 0; box-shadow: 1px 0 0 #dfeaf2; }
```
